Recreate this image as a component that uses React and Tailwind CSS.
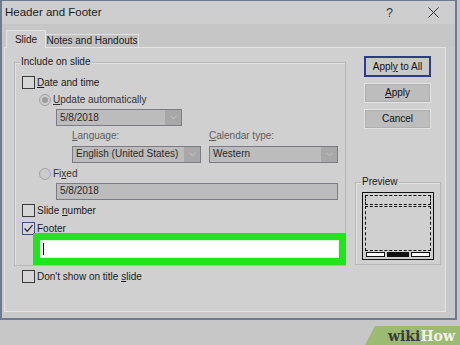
import React from "react";

const U = ({ children }) => <span className="underline underline-offset-1">{children}</span>;

function Check({ checked }) {
  return (
    <div
      className={
        "w-[13px] h-[13px] border flex items-center justify-center shrink-0 " +
        (checked ? "border-[#3d4f8f] bg-[#d6d6d6]" : "border-[#3a3a3a] bg-[#d6d6d6]")
      }
    >
      {checked && (
        <svg width="11" height="11" viewBox="0 0 11 11">
          <path d="M1.5 5.5 L4.3 8.3 L9.5 2.2" fill="none" stroke="#2a2a3a" strokeWidth="1.3" />
        </svg>
      )}
    </div>
  );
}

function Radio({ dot }) {
  return (
    <div className="w-[12px] h-[12px] rounded-full border border-[#a3a3a3] bg-[#cbcbcb] flex items-center justify-center shrink-0">
      {dot && <div className="w-[6px] h-[6px] rounded-full bg-[#9c9c9c]" />}
    </div>
  );
}

function Drop({ w, text }) {
  return (
    <div className={"h-[17px] border border-[#7c7c86] bg-[#bcbcbc] flex " + w}>
      <div className="flex-1 flex items-center pl-[3px] text-[#2a2a2a]">{text}</div>
      <div className="w-[16px] bg-[#a8a8a8] flex items-center justify-center">
        <svg width="7" height="5" viewBox="0 0 7 5">
          <path d="M0.5 0.8 L3.5 3.8 L6.5 0.8" fill="none" stroke="#c4c4c4" strokeWidth="1" />
        </svg>
      </div>
    </div>
  );
}

function Btn({ children, def }) {
  return (
    <div
      className={
        "w-[67px] flex items-center justify-center text-[#111] " +
        (def
          ? "h-[21px] border-2 border-[#2c3b8c] bg-[#c9c9c9]"
          : "h-[20px] border border-[#e2e2e2] bg-[#bdbdbd] shadow-[inset_0_0_0_1px_#b0b0b0]")
      }
    >
      <span>{children}</span>
    </div>
  );
}

export default function App() {
  return (
    <div className="w-[460px] h-[345px] bg-[#c7c7c7] relative overflow-hidden font-['Liberation_Sans',Arial,sans-serif] text-[10px] leading-none text-[#1a1a1a]">
      <div className="w-[457px] h-[320px] flex flex-col bg-[#c8c8c8] border-l-2 border-r-2 border-b-2 border-t border-[#6c7a92]">
        {/* Title bar */}
        <div className="h-[23px] flex items-center pl-[3px] bg-[#cecece] shrink-0">
          <div className="text-[11.5px] text-[#1a1a1a] flex-1 pt-[1px]">Header and Footer</div>
          <div className="text-[12px] text-[#333] mr-[35px]">?</div>
          <svg width="11" height="11" viewBox="0 0 11 11" className="mr-[16px]">
            <path d="M0.5 0.5 L10.5 10.5 M10.5 0.5 L0.5 10.5" stroke="#333" strokeWidth="1" />
          </svg>
        </div>
        {/* Tab strip */}
        <div className="h-[23px] flex items-end pl-[4px] shrink-0 bg-[#c6c6c6]">
          <div className="w-[40px] h-[18px] border-t border-l border-r border-[#e4e4e4] bg-[#d0d0d0] flex items-center justify-center -mb-[1px] relative z-10">
            Slide
          </div>
          <div className="w-[93px] h-[13px] border-t border-r border-[#e0e0e0] bg-[#c2c2c2] flex items-center justify-center">
            Notes and Handouts
          </div>
        </div>
        {/* Panel */}
        <div className="ml-[2px] w-[442px] h-[265px] border border-[#e4e4e4] bg-[#d0d0d0] flex shrink-0">
          {/* Left column */}
          <div className="pl-[9px] pt-[14px] flex flex-col">
            <div className="relative w-[332px] h-[204px] border border-[#b8b8b8] shadow-[inset_1px_1px_0_#e2e2e2] flex flex-col">
              <div className="absolute -top-[6px] left-[5px] px-[1px] bg-[#d0d0d0]">Include on slide</div>
              {/* Date and time */}
              <div className="mt-[13px] h-[13px] pl-[7px] flex items-center gap-[2px]">
                <Check />
                <span>
                  <U>D</U>ate and time
                </span>
              </div>
              <div className="mt-[5px] h-[13px] pl-[24px] flex items-center gap-[2px] text-[#333]">
                <Radio dot />
                <span>
                  <U>U</U>pdate automatically
                </span>
              </div>
              <div className="mt-[3px] pl-[41px]">
                <Drop w="w-[126px]" text="5/8/2018" />
              </div>
              <div className="mt-[4px] h-[12px] pl-[57px] flex items-center text-[#5c5c5c]">
                <div className="w-[137px]">
                  <U>L</U>anguage:
                </div>
                <div>
                  <U>C</U>alendar type:
                </div>
              </div>
              <div className="mt-[4px] pl-[57px] flex gap-[8px]">
                <Drop w="w-[129px]" text="English (United States)" />
                <Drop w="w-[129px]" text="Western" />
              </div>
              <div className="mt-[5px] h-[13px] pl-[24px] flex items-center gap-[2px] text-[#333]">
                <Radio />
                <span>
                  Fi<U>x</U>ed
                </span>
              </div>
              <div className="mt-[3px] ml-[41px] w-[282px] h-[18px] border border-[#7c7c86] bg-[#bcbcbc] flex items-center pl-[3px] text-[#2a2a2a]">
                5/8/2018
              </div>
              <div className="mt-[4px] h-[13px] pl-[7px] flex items-center gap-[2px]">
                <Check />
                <span>
                  Slide <U>n</U>umber
                </span>
              </div>
              <div className="mt-[5px] h-[13px] pl-[7px] flex items-center gap-[2px]">
                <Check checked />
                <span>
                  <U>F</U>ooter
                </span>
              </div>
              <div className="-mt-[2px] ml-[18px] w-[313px] h-[32px] border-[7px] border-[#22e41d] bg-[#22e41d] shrink-0">
                <div className="w-full h-full bg-white border border-[#d8f5d8] flex items-center pl-[2px]">
                  <div className="w-[1px] h-[12px] bg-[#111]" />
                </div>
              </div>
            </div>
            <div className="mt-[4px] h-[13px] pl-[8px] flex items-center gap-[2px]">
              <Check />
              <span>
                Don't show on title <U>s</U>lide
              </span>
            </div>
          </div>
          {/* Right column */}
          <div className="ml-[9px] pt-[8px] flex flex-col">
            <div className="ml-[9px] flex flex-col gap-[6px]">
              <Btn def>
                Appl<U>y</U> to All
              </Btn>
              <Btn>
                <U>A</U>pply
              </Btn>
              <Btn>Cancel</Btn>
            </div>
            <div className="relative mt-[53px] w-[86px] h-[83px] border border-[#b8b8b8] shadow-[inset_1px_1px_0_#e2e2e2]">
              <div className="absolute -top-[6px] left-[5px] px-[1px] bg-[#d0d0d0]">Preview</div>
              <div className="ml-[6px] mt-[9px] w-[72px] h-[68px] border border-[#111] p-[2px] flex flex-col gap-[1px]">
                <div className="h-[10px] border border-dashed border-[#111]" />
                <div className="flex-1 border border-dashed border-[#111]" />
                <div className="h-[5px] flex gap-[2px] px-[1px]">
                  <div className="flex-1 border border-[#111] bg-white" />
                  <div className="w-[22px] bg-[#111]" />
                  <div className="flex-1 border border-[#111] bg-white" />
                </div>
              </div>
            </div>
          </div>
        </div>
      </div>
      {/* wikiHow badge */}
      <div className="absolute right-0 bottom-0 w-[95px] h-[19px] bg-[#9cba72] [clip-path:polygon(10px_0,100%_0,100%_100%,0_100%)] flex items-center justify-end pr-[5px] font-['DejaVu_Serif',serif] font-bold text-[14px]">
        <span className="text-[#3c3c3c]">wiki</span>
        <span className="text-[#f2f2ec]">How</span>
      </div>
    </div>
  );
}
